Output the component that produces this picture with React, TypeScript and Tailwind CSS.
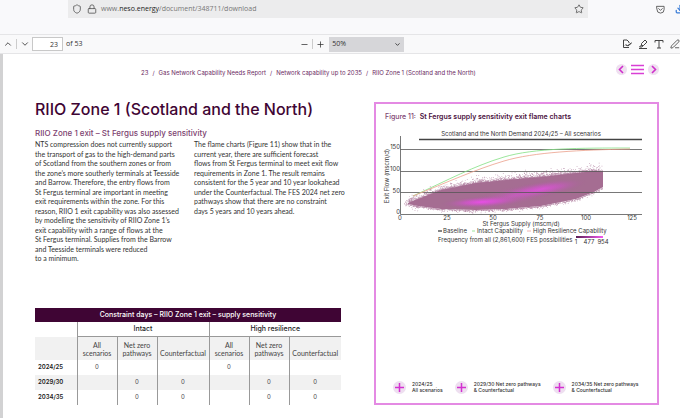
import React from "react";
import { ChevronUp, ChevronDown, Minus, Plus, Shield, Lock, Star, PenLine, Download } from "lucide-react";

const introLines = [
  "NTS compression does not currently support",
  "the transport of gas to the high-demand parts",
  "of Scotland from the southern zones or from",
  "the zone’s more southerly terminals at Teesside",
  "and Barrow. Therefore, the entry flows from",
  "St Fergus terminal are important in meeting",
  "exit requirements within the zone. For this",
  "reason, RIIO 1 exit capability was also assessed",
  "by modelling the sensitivity of RIIO Zone 1’s",
  "exit capability with a range of flows at the",
  "St Fergus terminal. Supplies from the Barrow",
  "and Teesside terminals were reduced",
  "to a minimum.",
];

const resultLines = [
  "The flame charts (Figure 11) show that in the",
  "current year, there are sufficient forecast",
  "flows from St Fergus terminal to meet exit flow",
  "requirements in Zone 1. The result remains",
  "consistent for the 5 year and 10 year lookahead",
  "under the Counterfactual. The FES 2024 net zero",
  "pathways show that there are no constraint",
  "days 5 years and 10 years ahead.",
];

const rows = [
  { year: "2024/25", cells: ["0", "", "", "0", "", ""] },
  { year: "2029/30", cells: ["", "0", "0", "", "0", "0"] },
  { year: "2034/35", cells: ["", "0", "0", "", "0", "0"] },
];

const columns = [
  ["All", "scenarios"],
  ["Net zero", "pathways"],
  ["", "Counterfactual"],
];

const views = [
  ["2024/25", "All scenarios"],
  ["2029/30 Net zero pathways", "& Counterfactual"],
  ["2034/35 Net zero pathways", "& Counterfactual"],
];

// Upper and lower edges of the flow cloud, as [x, top, bottom].
const edges = [
  [32, 76, 77],
  [42, 72, 79],
  [65, 63, 82],
  [100, 56, 83],
  [130, 53, 82],
  [165, 50, 79],
  [200, 46, 72],
  [218, 44, 65],
  [227, 44, 60],
];

function edgeAt(x: number): [number, number] {
  for (let i = 1; i < edges.length; i++) {
    const [x0, t0, b0] = edges[i - 1];
    const [x1, t1, b1] = edges[i];
    if (x <= x1) {
      const k = (x - x0) / (x1 - x0);
      return [t0 + (t1 - t0) * k, b0 + (b1 - b0) * k];
    }
  }
  return [44, 60];
}

function speckles() {
  let seed = 11;
  const random = () => {
    seed = (seed * 16807) % 2147483647;
    return seed / 2147483647;
  };
  let path = "";
  for (let i = 0; i < 2600; i++) {
    const x = 32 + random() * 194;
    const [top, bottom] = edgeAt(x);
    const spread = random() * random() * random();
    const y = random() < 0.7 ? top - spread * 10 : bottom + spread * 4;
    path += `M${x.toFixed(1)} ${y.toFixed(1)}h.7v.7h-.7z`;
  }
  for (let i = 0; i < 60; i++) {
    const x = 28 + random() * 14;
    const y = 76 + (random() - 0.5) * (x - 24);
    path += `M${x.toFixed(1)} ${y.toFixed(1)}h.7v.7h-.7z`;
  }
  return path;
}

const cloud =
  "M" + edges.map(([x, t]) => `${x} ${t}`).join("L") + "L" + [...edges].reverse().map(([x, , b]) => `${x} ${b}`).join("L") + "Z";

function FlameChart() {
  return (
    <svg viewBox="0 0 281 122" className="block w-full" fontFamily="Inter, sans-serif" fontSize="6" fill="#333" role="img" aria-label="St Fergus supply sensitivity exit flame chart">
      <defs>
        <radialGradient id="core">
          <stop offset="0" stopColor="#f04df0" />
          <stop offset="0.4" stopColor="#d850d4" stopOpacity="0.7" />
          <stop offset="1" stopColor="#a0648f" stopOpacity="0" />
        </radialGradient>
        <linearGradient id="scale">
          <stop offset="0" stopColor="#5c1f55" />
          <stop offset="1" stopColor="#f35cf0" />
        </linearGradient>
        <clipPath id="cloud"><path d={cloud} /></clipPath>
      </defs>
      <text x="145" y="9" textAnchor="middle">Scotland and the North Demand 2024/25 – All scenarios</text>
      <path d={cloud} fill="#a56d92" />
      <path d={speckles()} fill="#a56d92" fillOpacity="0.8" />
      <g clipPath="url(#cloud)">
        <ellipse cx="106" cy="75" rx="42" ry="6" fill="url(#core)" transform="rotate(-3 106 75)" />
        <ellipse cx="166" cy="62" rx="46" ry="8" fill="url(#core)" fillOpacity="0.75" transform="rotate(-9 166 62)" />
        <ellipse cx="137" cy="69" rx="54" ry="10" fill="url(#core)" fillOpacity="0.35" transform="rotate(-11 137 69)" />
      </g>
      <path d="M24.5 9V87.5H266M24.5 22.5H266M24.5 44.5H266M24.5 65.5H266" fill="none" stroke="#555" strokeWidth="0.8" />
      <path d="M43 12.5H266" stroke="#444" strokeWidth="1.3" />
      <path d="M37 69C72 53 98 39 128 30S205 21 254 21" fill="none" stroke="#83df83" strokeWidth="0.8" />
      <path d="M37 69C72 55 98 43 128 34S205 23 254 22" fill="none" stroke="#eba08a" strokeWidth="0.8" />
      <g textAnchor="end">
        <text x="24" y="22">150</text>
        <text x="24" y="44">100</text>
        <text x="24" y="66">50</text>
        <text x="24" y="87">0</text>
      </g>
      <g textAnchor="middle">
        <text x="24" y="93">0</text>
        <text x="71" y="93">25</text>
        <text x="117" y="93">50</text>
        <text x="164" y="93">75</text>
        <text x="210" y="93">100</text>
        <text x="256" y="93">125</text>
        <text x="145" y="99">St Fergus Supply (mscm/d)</text>
        <text transform="translate(13 49) rotate(-90)">Exit Flow (mscm/d)</text>
        <text x="200" y="117">1</text>
        <text x="213" y="117">477</text>
        <text x="227" y="117">954</text>
      </g>
      <path d="M62 104H66" stroke="#333" strokeWidth="1.2" />
      <path d="M96 104H99" stroke="#83df83" strokeWidth="0.8" />
      <path d="M151 104H155" stroke="#eba0a0" strokeWidth="0.8" />
      <text x="67" y="106">Baseline</text>
      <text x="101" y="106">Intact Capability</text>
      <text x="157" y="106">High Resilience Capability</text>
      <text x="62" y="115">Frequency from all (2,861,600) FES possibilities</text>
      <rect x="200" y="109" width="27" height="2" fill="url(#scale)" />
    </svg>
  );
}

function Lines({ lines }: { lines: string[] }) {
  return (
    <p>
      {lines.map((line) => (
        <span key={line} className="block whitespace-nowrap">{line}</span>
      ))}
    </p>
  );
}

function BrowserBar() {
  return (
    <header className="flex h-[34px] items-start justify-between bg-[#f9f9fb] pl-[68px]">
      <div className="flex h-[18px] w-[520px] shrink-0 items-center bg-[#ececed] px-1">
        <Shield className="size-[10px] text-[#555]" strokeWidth={2} />
        <Lock className="ml-[5px] size-[10px] text-[#555]" strokeWidth={2} />
        <div className="ml-[4px] flex-1 pt-px font-['Open_Sans',sans-serif] text-[7px] text-[#777]">
          www.<span className="text-[#1c1c1c]">neso.energy</span>/document/348711/download
        </div>
        <button aria-label="Bookmark"><Star className="size-[10px] text-[#555]" /></button>
      </div>
      <div className="flex h-[18px] flex-1 items-center justify-end gap-[10px] overflow-hidden">
        <button aria-label="Save to Pocket">
          <svg viewBox="0 0 20 20" className="size-[9px]" fill="none" stroke="#555" strokeWidth="2" strokeLinecap="round" strokeLinejoin="round">
            <path d="M2 3H18V10A8 8 0 0 1 2 10ZM6 8L10 12L14 8" />
          </svg>
        </button>
        <button aria-label="Downloads" className="w-[5px] overflow-hidden"><Download className="size-[10px] text-[#3b7dd8]" strokeWidth={3} /></button>
      </div>
    </header>
  );
}

function Toolbar() {
  return (
    <div className="flex h-[20px] items-center border-y border-[#e5e5e7] bg-[#f9f9fa] pl-[3px] font-['Open_Sans',sans-serif] text-[7px] text-[#333]">
      <button aria-label="Previous page"><ChevronUp className="size-[10px]" /></button>
      <span className="mx-[3px] h-[10px] w-px bg-[#ccc]" />
      <button aria-label="Next page"><ChevronDown className="size-[10px]" /></button>
      <input aria-label="Page" defaultValue="23" className="ml-[2px] h-[14px] w-[31px] border border-[#c8c8c8] bg-white pr-1 text-right" />
      <span className="ml-[3px]">of 53</span>
      <div className="ml-auto flex items-center">
        <button aria-label="Zoom out"><Minus className="size-[9px]" /></button>
        <span className="mx-[3px] h-[10px] w-px bg-[#ccc]" />
        <button aria-label="Zoom in"><Plus className="size-[9px]" /></button>
        <div className="relative ml-[4px]">
          <select aria-label="Zoom level" className="block h-[15px] w-[75px] appearance-none bg-[#d6d6d9] pl-[3px]">
            <option>50%</option>
          </select>
          <ChevronDown className="pointer-events-none absolute top-[4px] right-[3px] size-[7px]" strokeWidth={3} />
        </div>
      </div>
      <div className="ml-auto flex w-[58px] items-center gap-[6px] overflow-hidden text-[#444]">
        <button aria-label="Signature">
          <svg viewBox="0 0 20 20" className="size-[10px]" fill="none" stroke="currentColor" strokeWidth="2" strokeLinejoin="round">
            <path d="M14 17H3V2H10L14 6V8M6 13L8 11L10 14L19 8L12 14" />
          </svg>
        </button>
        <button aria-label="Highlight">
          <svg viewBox="0 0 20 20" className="size-[10px]" fill="none" stroke="currentColor" strokeWidth="2" strokeLinejoin="round">
            <path d="M7 9L14 2L18 6L11 13H7ZM7 12L3 16H8L10 13M2 19H18" />
          </svg>
        </button>
        <button aria-label="Text">
          <svg viewBox="0 0 20 20" className="size-[10px]" fill="none" stroke="currentColor" strokeWidth="2">
            <path d="M2 7V3H18V7M10 3V18M6 18H14" />
          </svg>
        </button>
        <button aria-label="Draw"><PenLine className="size-[10px]" /></button>
      </div>
    </div>
  );
}

function ConstraintTable() {
  return (
    <table className="w-full table-fixed border-collapse text-center text-[6px] leading-[8px] text-[#444]">
      <colgroup>
        <col className="w-[42px]" />
        <col className="w-[40px]" />
        <col className="w-[40px]" />
        <col className="w-[52px]" />
        <col className="w-[40px]" />
        <col className="w-[40px]" />
        <col className="w-[52px]" />
      </colgroup>
      <thead>
        <tr className="h-[14px] bg-[#3f0534] text-[7px] text-white">
          <th colSpan={7} className="p-0 font-medium">Constraint days – RIIO Zone 1 exit – supply sensitivity</th>
        </tr>
        <tr className="h-[15px] text-[7px] text-[#222]">
          <td className="p-0" />
          <th colSpan={3} className="border-b border-l border-[#999] p-0 font-medium">Intact</th>
          <th colSpan={3} className="border-b border-l border-[#999] p-0 font-medium">High resilience</th>
        </tr>
        <tr className="h-[23px] bg-[#f1f1f1] font-['Lato',sans-serif] text-[7px]">
          <td className="p-0" />
          {[...columns, ...columns].map(([top, bottom], i) => (
            <th key={i} className="border-l border-[#999] p-0 pb-[3px] align-bottom font-normal">
              <span className="block">{top}</span>
              <span className="block">{bottom}</span>
            </th>
          ))}
        </tr>
      </thead>
      <tbody>
        {rows.map(({ year, cells }) => (
          <tr key={year} className="h-[15px] even:bg-[#f1f1f1]">
            <th className="p-0 pl-[3px] text-left font-semibold text-[#222]">{year}</th>
            {cells.map((cell, i) => (
              <td key={i} className="border-l border-[#999] p-0">{cell}</td>
            ))}
          </tr>
        ))}
      </tbody>
    </table>
  );
}

export default function App() {
  return (
    <div className="min-h-screen overflow-hidden bg-white font-['Inter',sans-serif]">
      <BrowserBar />
      <Toolbar />
      <main className="min-h-[364px] border-l-3 border-[#d2d2d3] pr-[21px] pl-[32px]">
        <div className="flex h-[48px] items-start">
          <nav aria-label="Breadcrumb" className="flex gap-[4px] pt-[15px] pl-[106px] text-[6px] leading-[8px] whitespace-nowrap text-[#6b2a5f]">
            <span>23</span><span>/</span>
            <a href="#report">Gas Network Capability Needs Report</a><span>/</span>
            <a href="#network">Network capability up to 2035</a><span>/</span>
            <a href="#zone">RIIO Zone 1 (Scotland and the North)</a>
          </nav>
          <div className="ml-auto flex items-center gap-[4px] pt-[10px]">
            <button aria-label="Previous" className="size-[11px] rounded-full bg-[#efe0f0]">
              <svg viewBox="0 0 11 11" fill="none" stroke="#cf2fcb" strokeWidth="1.6"><path d="M7 2L3.500 5.500L7 9" /></svg>
            </button>
            <button aria-label="Contents" className="w-[13px]">
              <svg viewBox="0 0 13 11" fill="none" stroke="#d93fd5" strokeWidth="1.4"><path d="M0 1.500H13M0 5.500H13M0 9.500H13" /></svg>
            </button>
            <button aria-label="Next" className="size-[11px] rounded-full bg-[#efe0f0]">
              <svg viewBox="0 0 11 11" fill="none" stroke="#cf2fcb" strokeWidth="1.6"><path d="M4 2L7.500 5.500L4 9" /></svg>
            </button>
          </div>
        </div>
        <div className="grid grid-cols-[minmax(0,306fr)_minmax(0,285fr)] gap-[33px]">
          <section className="flex flex-col">
            <h1 className="h-[25px] text-[16px] leading-[14px] font-medium whitespace-nowrap text-[#3f0534]">RIIO Zone 1 (Scotland and the North)</h1>
            <h2 className="text-[8px] leading-[12px] font-medium text-[#7d3f70]">RIIO Zone 1 exit – St Fergus supply sensitivity</h2>
            <div className="mt-[1px] grid grid-cols-[minmax(0,159fr)_minmax(0,147fr)] font-['Lato',sans-serif] text-[7px] leading-[1.36] text-[#333]">
              <Lines lines={introLines} />
              <Lines lines={resultLines} />
            </div>
            <div className="mt-[44px]"><ConstraintTable /></div>
          </section>
          <figure className="flex flex-col border-2 border-[#e48ae3]">
            <figcaption className="pt-[8px] pl-[9px] text-[7px] leading-[10px] font-medium text-[#7d3f70]">
              Figure 11:&nbsp; <span className="font-semibold text-[#4b1241]">St Fergus supply sensitivity exit flame charts</span>
            </figcaption>
            <div className="mt-[5px]"><FlameChart /></div>
            <div className="mt-auto mb-[9px] flex gap-[12px] pl-[17px] text-[5px] leading-[6px] font-medium text-[#333]">
              {views.map(([first, second]) => (
                <button key={first} className="flex items-center gap-[6px] text-left whitespace-nowrap">
                  <svg viewBox="0 0 13 13" className="size-[13px]">
                    <circle cx="6.500" cy="6.500" r="6.500" fill="#eedff0" />
                    <path d="M6.500 2V11M2 6.500H11" stroke="#d331d0" strokeWidth="1.5" />
                  </svg>
                  <span><span className="block">{first}</span><span className="block">{second}</span></span>
                </button>
              ))}
            </div>
          </figure>
        </div>
      </main>
    </div>
  );
}
